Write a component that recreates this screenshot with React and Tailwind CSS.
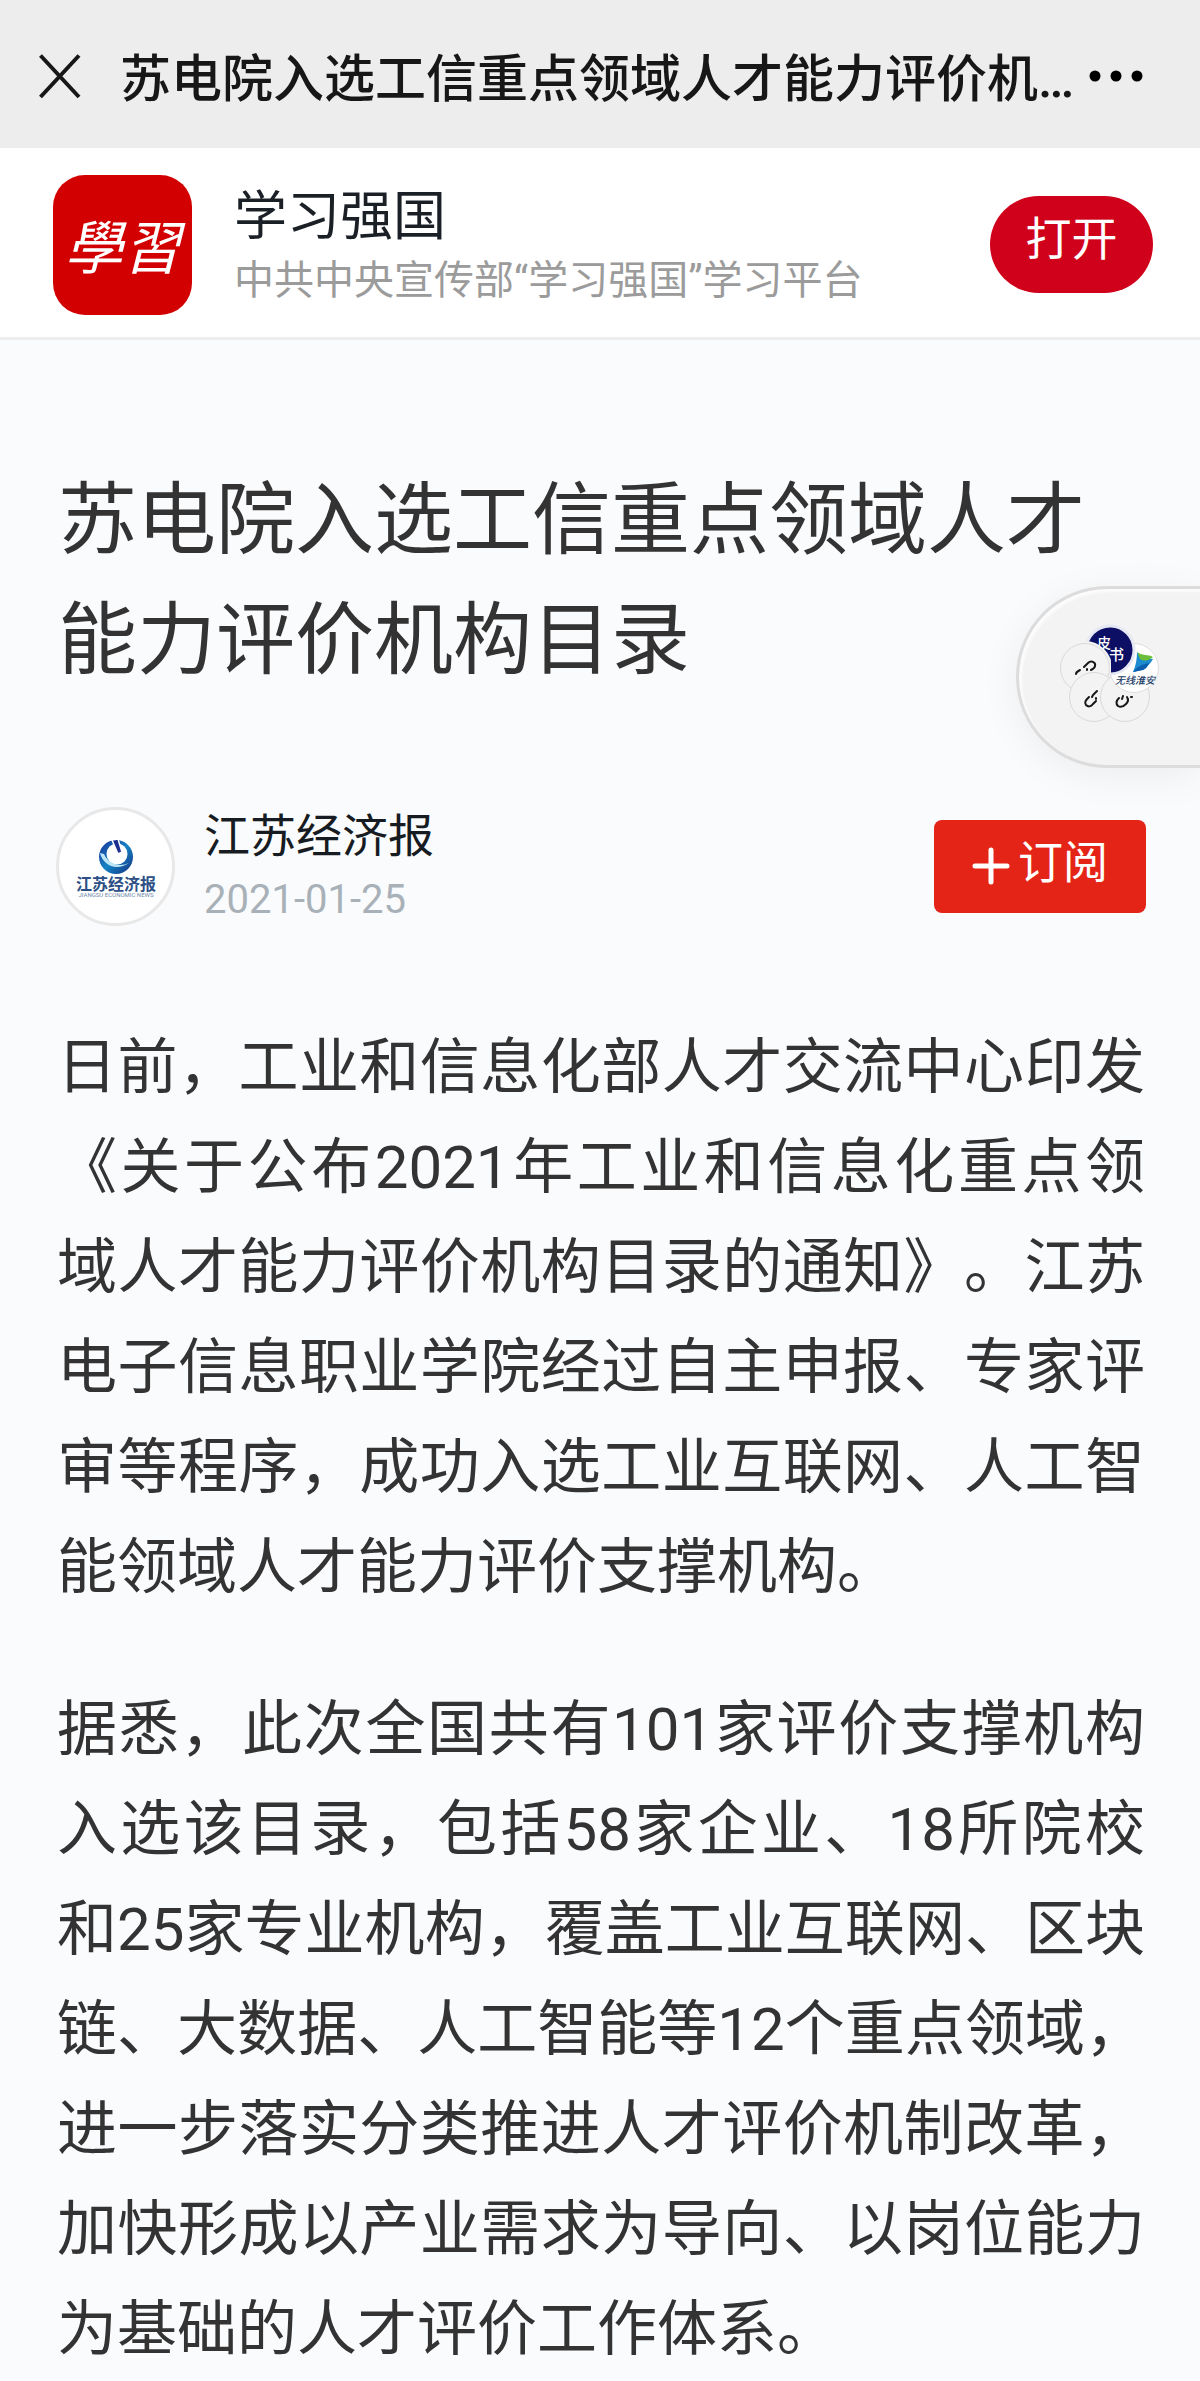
import { useState } from "react";

const ARTICLE = {
  title: "苏电院入选工信重点领域人才能力评价机构目录",
  source: "江苏经济报",
  date: "2021-01-25",
  paragraphs: [
    "日前，工业和信息化部人才交流中心印发《关于公布2021年工业和信息化重点领域人才能力评价机构目录的通知》。江苏电子信息职业学院经过自主申报、专家评审等程序，成功入选工业互联网、人工智能领域人才能力评价支撑机构。",
    "据悉，此次全国共有101家评价支撑机构入选该目录，包括58家企业、18所院校和25家专业机构，覆盖工业互联网、区块链、大数据、人工智能等12个重点领域，进一步落实分类推进人才评价机制改革，加快形成以产业需求为导向、以岗位能力为基础的人才评价工作体系。",
  ],
};

const MAX_TITLE = 18;
const shorten = (text) => (text.length > MAX_TITLE ? `${text.slice(0, MAX_TITLE)}…` : text);

const CloseIcon = () => (
  <svg className="w-[42px] h-[48px]" viewBox="0 0 42 48" fill="none" stroke="#171717" strokeWidth="4">
    <path d="M1.5 3.5 40 45M40 3.5 1.5 45" />
  </svg>
);

const MoreIcon = () => (
  <svg className="w-[54px] h-[12px]" viewBox="0 0 54 12">
    <circle cx="6" cy="6" r="5.5" />
    <circle cx="27" cy="6" r="5.5" />
    <circle cx="48" cy="6" r="5.5" />
  </svg>
);

const PaperLogo = () => (
  <svg className="w-full h-full" viewBox="0 0 113 113" role="img" aria-label="江苏经济报">
    <defs>
      <linearGradient id="globe" x1="0" y1="0" x2="1" y2="1">
        <stop offset="0" stopColor="#1b2f96" />
        <stop offset="0.5" stopColor="#1583c4" />
        <stop offset="1" stopColor="#14307f" />
      </linearGradient>
    </defs>
    <circle cx="57" cy="47" r="17" fill="url(#globe)" />
    <circle cx="58" cy="44" r="10.5" fill="#fff" />
    <path d="M41 43c3 12 16 19 29 10-9 4-20 2-25-9z" fill="#bfe6f7" />
    <path d="M53 30l6-1 4 13-4 2z" fill="#1c2f8f" stroke="#fff" strokeWidth="1.5" />
    <text x="57" y="80" textAnchor="middle" fontSize="16" fontWeight="700" fill="#2d4f85">江苏经济报</text>
    <text x="57" y="87" textAnchor="middle" fontSize="6" fill="#7089ab">JIANGSU ECONOMIC NEWS</text>
  </svg>
);

const DarkBadge = () => (
  <g>
    <circle cx="52" cy="26" r="24" fill="#0c0f63" stroke="#e6e8f4" strokeWidth="3" />
    <text x="39" y="24" fontSize="14" fontWeight="500" fill="#fff">皮</text>
    <text x="51" y="36" fontSize="15" fontWeight="500" fill="#fff">书</text>
  </g>
);

// Recent mini pages, fanned out in a ring where each one overlaps the next
const RecentPages = () => (
  <svg className="w-[104px] h-[100px]" viewBox="0 0 104 100" strokeLinecap="round">
    <defs>
      <clipPath id="rightHalf">
        <rect x="53" y="0" width="51" height="60" />
      </clipPath>
    </defs>
    <DarkBadge />
    <g fill="#f3f3f3" stroke="#d9d9d9">
      <circle cx="27" cy="44" r="25" stroke="#f3f3f3" strokeWidth="4" />
      <circle cx="27" cy="44" r="24.5" />
      <path d="M18 50c0-2 2-3 4-4M26 43l4-4c3-3 8-1 7 3 0 2-2 3-4 4M29 45v1" fill="none" stroke="#171717" strokeWidth="2" />
      <circle cx="36" cy="73" r="24.5" />
      <path d="M31 73c-3 3-5 5-3 8 2 2 5 2 7-1l3-3M34 73l1-2 4-4M38 74v1" fill="none" stroke="#171717" strokeWidth="2" />
      <circle cx="67" cy="73" r="24.5" />
      <path d="M61 74c-3 3-3 6-1 8 3 2 5 1 8-2 2-2 3-4 1-7M65 72l-1 3M73 73h1" fill="none" stroke="#171717" strokeWidth="2" />
    </g>
    <circle cx="76" cy="44" r="24.5" fill="#fff" stroke="#dedede" />
    <path d="M79 28c4 6 11 6 16 7-3 5-6 8-10 11-4 0-7 2-10 2 3-7 4-13 4-20z" fill="#1c8bd0" />
    <path d="M79 28c5 4 11 2 16 5-3 3-8 5-13 2z" fill="#6cbf3a" />
    <path d="M75 48c4-5 9-8 16-9-2 4-3 6-6 7z" fill="#0b5fae" />
    <text x="57" y="60" fontSize="10" fontWeight="500" fontStyle="italic" fill="#1d3d66">无线淮安</text>
    <g clipPath="url(#rightHalf)">
      <DarkBadge />
    </g>
  </svg>
);

const TopBar = ({ title }) => (
  <header className="flex items-center h-[148px] pt-1 pl-[39px] pr-[57px] bg-[#ededed]">
    <button aria-label="关闭" className="shrink-0"><CloseIcon /></button>
    <p className="flex-1 min-w-0 whitespace-nowrap ml-[39px] pt-2 text-[51px] leading-[72px] font-medium text-[#171717]">{shorten(title)}</p>
    <button aria-label="更多" className="shrink-0"><MoreIcon /></button>
  </header>
);

const AppBanner = () => (
  <section className="flex items-center h-[192px] pt-1 pl-[53px] pr-[47px] bg-white border-b-3 border-[#eeeeee]">
    <div className="flex items-center justify-center shrink-0 w-[139px] h-[140px] rounded-[32px] bg-[#d20000] text-white text-[58px] italic font-['Noto_Sans_CJK_TC',sans-serif]">
      學習
    </div>
    <div className="flex-1 min-w-0 ml-[42px] pt-1">
      <p className="text-[53px] leading-[68px] text-[#1b1f26]">学习强国</p>
      <p className="text-[40px] leading-[60px] text-[#9b9b9b]">中共中央宣传部“学习强国”学习平台</p>
    </div>
    <button className="shrink-0 w-[163px] h-[97px] pb-3 rounded-full bg-[#d0021b] text-white text-[46px] leading-[60px]">打开</button>
  </section>
);

const App = () => {
  const [subscribed, setSubscribed] = useState(false);

  return (
    <div className="relative min-h-screen overflow-hidden bg-[#fafbfd] font-['Roboto','Noto_Sans_CJK_SC',sans-serif]" lang="zh-CN">
      <TopBar title={ARTICLE.title} />
      <AppBanner />

      <article className="pl-[57px] pr-[55px] pt-[121px] text-[#333333] [text-spacing-trim:space-all]">
        <h1 className="text-[79px] leading-[120px] pl-px">{ARTICLE.title}</h1>

        {/* Source */}
        <div className="flex items-center mt-[101px] -mx-px">
          <div className="shrink-0 w-[119px] h-[119px] rounded-full bg-white border-3 border-[#e8e8e8] overflow-hidden">
            <PaperLogo />
          </div>
          <div className="flex-1 ml-[29px] pt-1">
            <p className="text-[46px] leading-[60px] text-[#171b22]">{ARTICLE.source}</p>
            <time className="block mt-1 text-[40px] leading-[60px] text-[#a9b1b8]">{ARTICLE.date}</time>
          </div>
          <button
            onClick={() => setSubscribed(!subscribed)}
            className="flex items-center justify-center gap-2 w-[212px] h-[93px] pb-1 rounded-lg bg-[#e42417] text-white text-[45px] leading-[60px]"
          >
            {!subscribed && (
              <svg className="w-[38px] h-[38px] mt-1" viewBox="0 0 38 38" stroke="currentColor" strokeWidth="5" strokeLinecap="round">
                <path d="M19 3v32M3 19h32" />
              </svg>
            )}
            {subscribed ? "已订阅" : "订阅"}
          </button>
        </div>

        {/* Body */}
        <div className="flex flex-col gap-[62px] mt-[88px] text-[60px] leading-[100px] text-justify">
          {ARTICLE.paragraphs.map((text) => (
            <p key={text}>{text}</p>
          ))}
        </div>
      </article>

      {/* Floating tab docked to the right edge */}
      <button
        aria-label="浮窗"
        className="absolute right-0 top-[586px] w-[184px] h-[182px] pl-[39px] pt-[35px] flex items-start rounded-l-full bg-[#f3f3f3] border-3 border-r-0 border-[#dcdcdc] shadow-[0_8px_40px_rgba(0,0,0,0.06),inset_3px_3px_2px_#fbfbfb]"
      >
        <RecentPages />
      </button>
    </div>
  );
};

export default App;
